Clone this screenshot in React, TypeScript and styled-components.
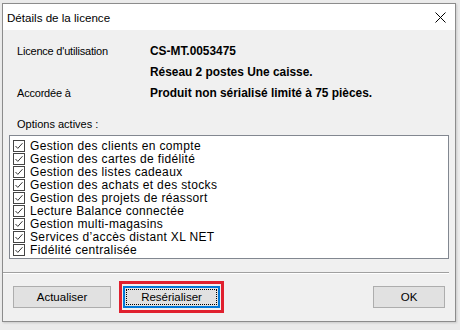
import React from "react";
import styled, { createGlobalStyle } from "styled-components";

const Global = createGlobalStyle`
  html, body { margin: 0; padding: 0; background: #ebebeb; }
  body { font-family: "Liberation Sans", Arial, sans-serif; }
  #root { width: 460px; height: 330px; }
`;

const Window = styled.div`
  margin: 3px 0 0 2px;
  width: 452px;
  border: 1px solid #8c8c8c;
  background: #f0f0f0;
  box-shadow: 1px 1px 2px rgba(0,0,0,0.15);
  display: flex;
  flex-direction: column;
`;

const TitleBar = styled.div`
  height: 26px;
  background: #ffffff;
  display: flex;
  align-items: center;
  justify-content: space-between;
  padding: 0 9px 0 4px;
`;

const Title = styled.span`
  font-family: "Liberation Sans", Arial, sans-serif;
  font-size: 11.6px;
  color: #000;
`;

const Body = styled.div`
  display: flex;
  flex-direction: column;
  padding: 10px 0 8px 0;
`;

const InfoGrid = styled.div`
  display: grid;
  grid-template-columns: 133px 1fr;
  grid-auto-rows: 21px;
  align-items: center;
  padding-left: 14px;
`;

const Label = styled.span`
  font-size: 11px;
  letter-spacing: -0.2px;
  color: #000;
`;

const Value = styled.span`
  font-size: 11.9px;
  font-weight: bold;
  color: #000;
`;

const SectionLabel = styled.div`
  margin-top: 15px;
  padding-left: 14px;
  font-size: 11px;
  line-height: 13px;
  color: #000;
`;

const ListBox = styled.div`
  margin: 4px 6px 0 6px;
  border: 1px solid #828790;
  background: #fff;
  padding: 3px 0 2px 3px;
  display: flex;
  flex-direction: column;
`;

const Item = styled.label`
  display: flex;
  align-items: center;
  height: 13px;
  gap: 5px;
  font-size: 12px;
  letter-spacing: 0.35px;
  color: #000;
`;

const Separator = styled.div`
  margin: 13px 6px 0 0;
  height: 0;
  border-top: 1px solid #a0a0a0;
  border-bottom: 1px solid #ffffff;
`;

const ButtonRow = styled.div`
  display: flex;
  align-items: center;
  margin-top: 7px;
  padding: 0 10px 0 10px;
`;

const Button = styled.button<{ $w: number; $focused?: boolean }>`
  width: ${(p) => p.$w}px;
  height: 22px;
  box-sizing: border-box;
  background: #e1e1e1;
  border: 1px solid ${(p) => (p.$focused ? "#0078d7" : "#adadad")};
  ${(p) => (p.$focused ? "box-shadow: inset 0 0 0 1px #0078d7;" : "")}
  font-family: "Liberation Sans", Arial, sans-serif;
  font-size: 11.5px;
  color: #000;
  padding: 0;
  position: relative;
  display: flex;
  align-items: center;
  justify-content: center;
`;

const FocusRect = styled.span`
  position: absolute;
  inset: 2px;
  border: 1px dotted #000;
`;

const Highlight = styled.div`
  margin-left: 8px;
  border: 3px solid #e0202e;
  padding: 2px 1px;
  display: flex;
`;

const Spacer = styled.div`
  flex: 1;
`;

const Check = () => (
  <svg width="12" height="12" viewBox="0 0 12 12">
    <rect x="0.5" y="0.5" width="11" height="11" fill="#fff" stroke="#444" />
    <path d="M2.5 6 L4.8 8.4 L9.5 3.2" fill="none" stroke="#333" strokeWidth="1" />
  </svg>
);

const CloseIcon = () => (
  <svg width="11" height="11" viewBox="0 0 11 11">
    <path d="M0.5 0.5 L10.5 10.5 M10.5 0.5 L0.5 10.5" stroke="#000" strokeWidth="1" />
  </svg>
);

const options = [
  "Gestion des clients en compte",
  "Gestion des cartes de fidélité",
  "Gestion des listes cadeaux",
  "Gestion des achats et des stocks",
  "Gestion des projets de réassort",
  "Lecture Balance connectée",
  "Gestion multi-magasins",
  "Services d\u2019accès distant XL NET",
  "Fidélité centralisée",
];

export default function App() {
  return (
    <>
      <Global />
      <Window>
        <TitleBar>
          <Title>Détails de la licence</Title>
          <CloseIcon />
        </TitleBar>
        <Body>
          <InfoGrid>
            <Label>Licence d'utilisation</Label>
            <Value>CS-MT.0053475</Value>
            <span />
            <Value>Réseau 2 postes Une caisse.</Value>
            <Label>Accordée à</Label>
            <Value>Produit non sérialisé limité à 75 pièces.</Value>
          </InfoGrid>
          <SectionLabel>Options actives :</SectionLabel>
          <ListBox>
            {options.map((o) => (
              <Item key={o}>
                <Check />
                {o}
              </Item>
            ))}
          </ListBox>
          <Separator />
          <ButtonRow>
            <Button $w={98}>Actualiser</Button>
            <Highlight>
              <Button $w={97} $focused>
                <FocusRect />
                Resérialiser
              </Button>
            </Highlight>
            <Spacer />
            <Button $w={72}>OK</Button>
          </ButtonRow>
        </Body>
      </Window>
    </>
  );
}
